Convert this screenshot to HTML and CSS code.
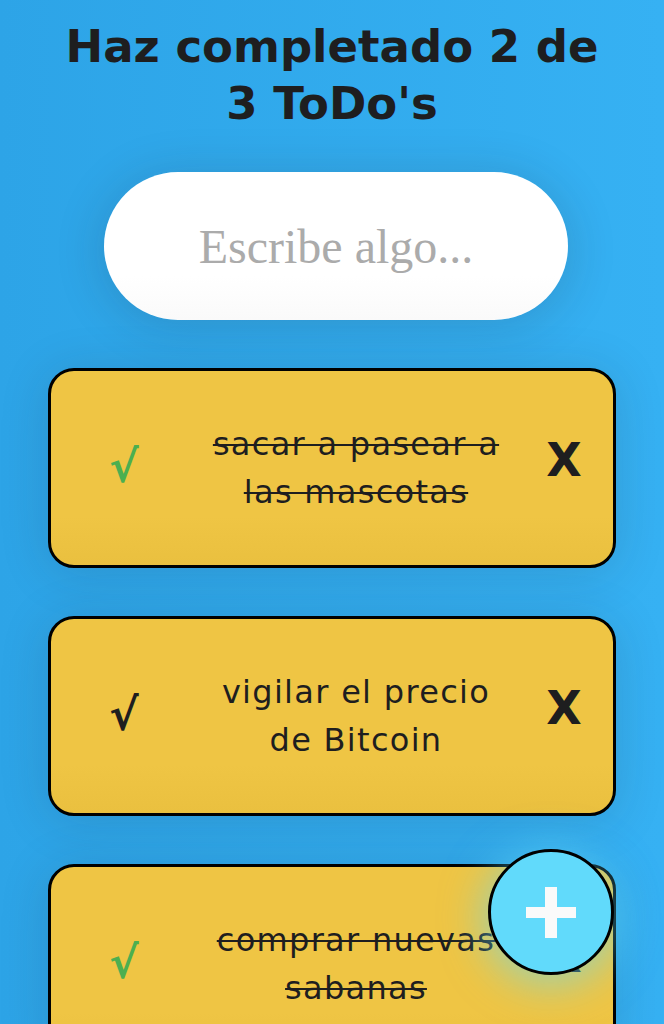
FILE: index.html
```html
<!DOCTYPE html>
<html lang="es">
<head>
<meta charset="utf-8">
<title>ToDo</title>
<link rel="stylesheet" href="styles.css">
</head>
<body>
<main class="app">
  <h1 class="counter">Haz completado 2 de 3 ToDo's</h1>
  <input class="search" type="text" placeholder="Escribe algo...">
  <ul class="list">
    <li class="item">
      <span class="check check--done">√</span>
      <p class="text text--done">sacar a pasear a las mascotas</p>
      <span class="delete">X</span>
    </li>
    <li class="item">
      <span class="check">√</span>
      <p class="text">vigilar el precio de Bitcoin</p>
      <span class="delete">X</span>
    </li>
    <li class="item">
      <span class="check check--done">√</span>
      <p class="text text--done">comprar nuevas sabanas</p>
      <span class="delete">X</span>
    </li>
  </ul>
</main>
<button class="fab" type="button" aria-label="Crear ToDo">
  <svg class="fab__icon" width="52" height="52" viewBox="0 0 52 52" aria-hidden="true">
    <rect x="20" y="0" width="12" height="51" fill="#fafafa"/>
    <rect x="1" y="20" width="50" height="11" fill="#fafafa"/>
  </svg>
</button>
</body>
</html>
```

FILE: styles.css
```css
* { box-sizing: border-box; }

html, body {
  margin: 0;
  padding: 0;
}

body {
  min-height: 100vh;
  background: linear-gradient(to right, #2da4e7, #36b1f3);
  font-family: "DejaVu Sans", "Open Sans", sans-serif;
  color: #1e1e1f;
  overflow: hidden;
}

.app {
  display: flex;
  flex-direction: column;
  align-items: center;
  padding-top: 18px;
}

.counter {
  margin: 0;
  max-width: 560px;
  text-align: center;
  font-size: 45px;
  line-height: 57px;
  font-weight: 700;
  color: #1e1e1f;
}

.search {
  margin-top: 40px;
  margin-left: 8px;
  width: 464px;
  height: 148px;
  border: none;
  border-radius: 74px;
  background: linear-gradient(to bottom, #ffffff 70%, #fafafa);
  box-shadow: 0 5px 50px rgba(32, 35, 41, 0.18);
  font-family: "Liberation Serif", serif;
  font-size: 48px;
  text-align: center;
  color: #1e1e1f;
  outline: none;
}

.search::placeholder {
  color: #ababab;
}

.list {
  list-style: none;
  margin: 48px 0 0;
  padding: 0;
  display: flex;
  flex-direction: column;
  gap: 48px;
  width: 568px;
}

.item {
  height: 200px;
  border: 3px solid #000;
  border-radius: 26px;
  background: linear-gradient(to bottom, #efc544 75%, #eac03f);
  box-shadow: 0 5px 50px rgba(32, 35, 41, 0.15);
  display: grid;
  grid-template-columns: 146px 318px 1fr;
  align-items: center;
}

.check {
  justify-self: center;
  font-size: 44px;
  font-weight: 700;
  line-height: 1;
  color: #1e1e1f;
  margin-top: -2px;
}

.check--done {
  color: #4caf50;
}

.text {
  margin: 0;
  padding: 0 4px;
  text-align: center;
  font-size: 32px;
  letter-spacing: 1.3px;
  line-height: 48px;
  color: #1e1e1f;
}

.text--done {
  text-decoration: line-through;
  text-decoration-thickness: 2px;
}

.delete {
  justify-self: center;
  font-size: 46px;
  font-weight: 700;
  line-height: 1;
  margin-top: -16px;
  color: #1e1e1f;
}

.fab {
  position: fixed;
  right: 50px;
  bottom: 49px;
  width: 126px;
  height: 126px;
  padding: 0;
  border: 3px solid #000;
  border-radius: 50%;
  background: #61dafb;
  box-shadow: 0 5px 40px 6px rgba(97, 218, 251, 0.55);
  display: flex;
  align-items: center;
  justify-content: center;
  cursor: pointer;
}

.fab__icon {
  display: block;
  margin-top: 1px;
}
```
